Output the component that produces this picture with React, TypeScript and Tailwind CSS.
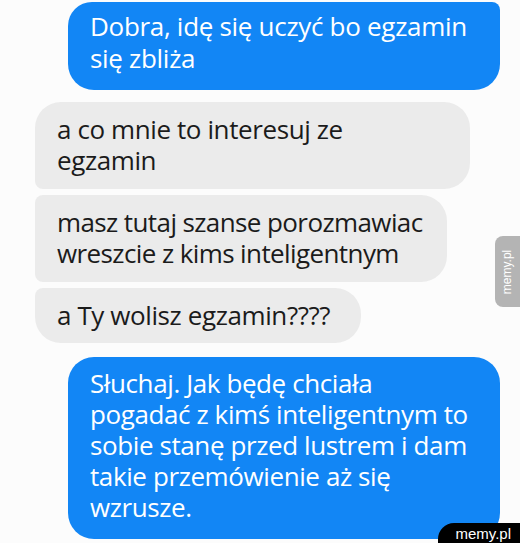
import React from "react";

const font = { fontFamily: '"Open Sans", "Noto Sans", sans-serif' };

export default function App() {
  return (
    <div
      className="relative w-[520px] h-[543px] overflow-hidden bg-[#fcfcfc] flex flex-col"
      style={font}
    >
      <div className="mt-[2px] ml-[68px] w-[432px] bg-[#1286f5] text-white text-[26px] leading-[32px] tracking-[-0.3px] pl-[22px] pr-[16px] pt-[8px] pb-[16px] rounded-tl-[24px] rounded-tr-[8px] rounded-br-[26px] rounded-bl-[26px]">
        Dobra, idę się uczyć bo egzamin się zbliża
      </div>

      <div className="mt-[12px] ml-[35px] w-[435px] bg-[#ebebeb] text-[#1b1b1b] text-[26px] leading-[31px] tracking-[-0.4px] pl-[22px] pr-[16px] pt-[12px] pb-[13px] rounded-tl-[26px] rounded-tr-[26px] rounded-br-[26px] rounded-bl-[8px]">
        <div>a co mnie to interesuj ze</div>
        <div>egzamin</div>
      </div>

      <div className="mt-[6px] ml-[35px] w-[412px] bg-[#ebebeb] text-[#1b1b1b] text-[26px] leading-[31px] tracking-[-0.6px] pl-[22px] pr-[6px] pt-[12px] pb-[13px] rounded-tl-[8px] rounded-tr-[26px] rounded-br-[26px] rounded-bl-[8px]">
        <div className="whitespace-nowrap">masz tutaj szanse porozmawiac</div>
        <div className="whitespace-nowrap">wreszcie z kims inteligentnym</div>
      </div>

      <div className="mt-[6px] ml-[35px] w-[326px] bg-[#ebebeb] text-[#1b1b1b] text-[26px] leading-[31px] tracking-[-0.4px] pl-[22px] pr-[10px] pt-[12px] pb-[12px] rounded-tl-[8px] rounded-tr-[26px] rounded-br-[26px] rounded-bl-[26px]">
        a Ty wolisz egzamin????
      </div>

      <div className="mt-[14px] ml-[68px] w-[432px] bg-[#1286f5] text-white text-[26px] leading-[31px] tracking-[-0.4px] pl-[22px] pr-[6px] pt-[11px] pb-[16px] rounded-tl-[26px] rounded-tr-[26px] rounded-br-[26px] rounded-bl-[26px]">
        <div className="whitespace-nowrap">Słuchaj. Jak będę chciała</div>
        <div className="whitespace-nowrap">pogadać z kimś inteligentnym to</div>
        <div className="whitespace-nowrap">sobie stanę przed lustrem i dam</div>
        <div className="whitespace-nowrap">takie przemówienie aż się</div>
        <div className="whitespace-nowrap">wzrusze.</div>
      </div>

      {/* side watermark */}
      <div className="absolute right-0 top-[236px] w-[25px] h-[71px] bg-[#b4b4b4] rounded-l-[8px] flex items-center justify-center">
        <span
          className="text-white text-[12px] leading-none whitespace-nowrap -rotate-90"
          style={{ fontFamily: '"Liberation Sans", Arial, sans-serif' }}
        >
          memy.pl
        </span>
      </div>

      {/* bottom watermark */}
      <div
        className="absolute right-0 bottom-0 w-[82px] h-[20px] bg-black rounded-tl-[16px] flex items-center justify-end pr-[9px] text-white text-[15px] leading-none"
        style={{ fontFamily: '"Liberation Sans", Arial, sans-serif' }}
      >
        memy.pl
      </div>
    </div>
  );
}
